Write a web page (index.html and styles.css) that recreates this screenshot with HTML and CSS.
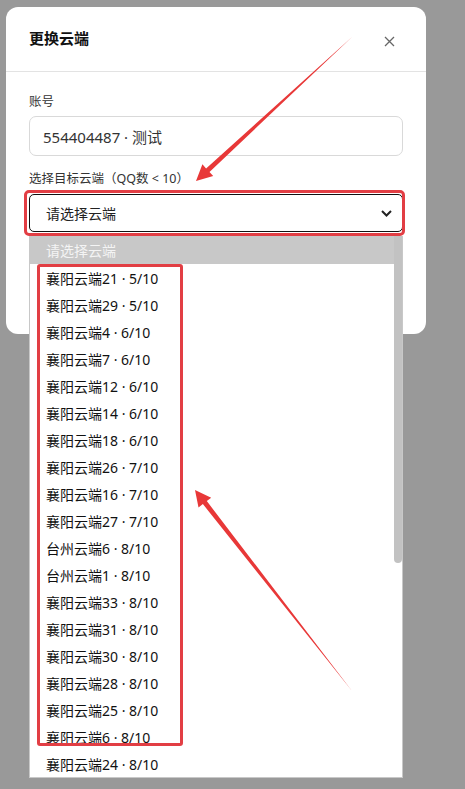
FILE: index.html
```html
<!DOCTYPE html>
<html lang="zh-CN">

<head>
    <meta charset="UTF-8">
    <meta name="viewport" content="width=device-width, initial-scale=1.0">
    <title>更换云端</title>
    <link rel="stylesheet" href="styles.css">
</head>

<body>
    <div class="modal">
        <div class="modal-header">
            <h2>更换云端</h2>
            <button class="close" type="button" aria-label="关闭">
                <svg width="11" height="11" viewBox="0 0 11 11">
                    <path d="M1 1L10 10M10 1L1 10" stroke="#666" stroke-width="1.3" fill="none" />
                </svg>
            </button>
        </div>
        <div class="modal-body">
            <label class="field-label">账号</label>
            <div class="text-input">554404487 · 测试</div>

            <label class="field-label second">选择目标云端（QQ数 &lt; 10）</label>
            <div class="select-wrap">
                <div class="select">
                    <span>请选择云端</span>
                    <svg width="11" height="7" viewBox="0 0 11 7">
                        <path d="M1 1L5.5 5.5L10 1" stroke="#222" stroke-width="2" fill="none" />
                    </svg>
                </div>

                <div class="listbox">
                    <div class="options">
                        <div class="option selected">请选择云端</div>
                        <div class="option">襄阳云端21 · 5/10</div>
                        <div class="option">襄阳云端29 · 5/10</div>
                        <div class="option">襄阳云端4 · 6/10</div>
                        <div class="option">襄阳云端7 · 6/10</div>
                        <div class="option">襄阳云端12 · 6/10</div>
                        <div class="option">襄阳云端14 · 6/10</div>
                        <div class="option">襄阳云端18 · 6/10</div>
                        <div class="option">襄阳云端26 · 7/10</div>
                        <div class="option">襄阳云端16 · 7/10</div>
                        <div class="option">襄阳云端27 · 7/10</div>
                        <div class="option">台州云端6 · 8/10</div>
                        <div class="option">台州云端1 · 8/10</div>
                        <div class="option">襄阳云端33 · 8/10</div>
                        <div class="option">襄阳云端31 · 8/10</div>
                        <div class="option">襄阳云端30 · 8/10</div>
                        <div class="option">襄阳云端28 · 8/10</div>
                        <div class="option">襄阳云端25 · 8/10</div>
                        <div class="option">襄阳云端6 · 8/10</div>
                        <div class="option">襄阳云端24 · 8/10</div>
                    </div>
                    <div class="scroll-track">
                        <div class="scroll-thumb"></div>
                    </div>
                </div>
            </div>
            <div class="footer-space"></div>
        </div>
    </div>

    <!-- annotation marks drawn over the screenshot -->
    <div class="mark mark-select"></div>
    <div class="mark mark-options"></div>
    <svg class="arrows" width="465" height="789" viewBox="0 0 465 789">
        <polygon fill="#e83838"
            points="196,181 213.2,176.1 209.5,172 352,37 206.1,168.4 202.4,164.3" />
        <polygon fill="#e83838"
            points="195,490 198.5,507.5 202.9,504.1 352,691 206.8,501.1 211.2,497.7" />
    </svg>
</body>

</html>
```

FILE: styles.css
```css
body {
    margin: 0;
    padding: 7px 0 0 6px;
    height: 789px;
    box-sizing: border-box;
    overflow: hidden;
    background-color: #999999;
    font-family: "Noto Sans", "Noto Sans CJK SC", sans-serif;
    color: #222;
}

.modal {
    width: 420px;
    background-color: #fff;
    border-radius: 12px;
}

.modal-header {
    display: flex;
    align-items: center;
    justify-content: space-between;
    height: 64px;
    padding: 0 31px 0 23px;
    border-bottom: 1px solid #e3e3e3;
}

.modal-header h2 {
    margin: 0 0 4px 0;
    font-size: 15px;
    font-weight: 700;
    color: #111;
}

.close {
    display: flex;
    padding: 0;
    margin-top: 4px;
    border: none;
    background: none;
    cursor: pointer;
}

.modal-body {
    padding: 20px 23px 0 23px;
    display: flex;
    flex-direction: column;
}

.field-label {
    font-size: 12.5px;
    line-height: 20px;
    color: #333;
}

.field-label.second {
    margin-top: 13px;
}

.text-input {
    margin-top: 4px;
    height: 38px;
    padding: 0 13px;
    display: flex;
    align-items: center;
    border: 1px solid #d9d9d9;
    border-radius: 7px;
    font-size: 15px;
    color: #333;
}

.select-wrap {
    position: relative;
    margin-top: 5px;
}

.select {
    height: 36px;
    padding: 0 10px 0 16px;
    display: flex;
    align-items: center;
    justify-content: space-between;
    border: 1px solid #111;
    border-radius: 5px;
    font-size: 14px;
}

/* opened native list */
.listbox {
    position: absolute;
    top: 42px;
    left: 0;
    width: 374px;
    height: 542px;
    display: flex;
    background-color: #fff;
    border: 1px solid #c8c8c8;
    border-top: none;
    box-sizing: border-box;
    overflow: hidden;
    z-index: 2;
}

.options {
    flex: 1;
}

.option {
    height: 27px;
    padding-left: 16px;
    display: flex;
    align-items: center;
    font-size: 14px;
    color: #111;
    white-space: nowrap;
}

.option.selected {
    height: 28px;
    background-color: #c8c8c8;
    color: #f4f4f4;
}

.scroll-track {
    width: 8px;
}

.scroll-thumb {
    height: 327px;
    background-color: #c2c2c2;
    border-radius: 0 0 4px 4px;
}

.footer-space {
    height: 102px;
}

.mark {
    position: absolute;
    border: 3px solid #e23e44;
    z-index: 3;
}

.mark-select {
    left: 24px;
    top: 190px;
    width: 375px;
    height: 40px;
    border-radius: 5px;
}

.mark-options {
    left: 37px;
    top: 264px;
    width: 140px;
    height: 476px;
    border-radius: 3px;
}

.arrows {
    position: absolute;
    left: 0;
    top: 0;
    z-index: 4;
    pointer-events: none;
}
```
